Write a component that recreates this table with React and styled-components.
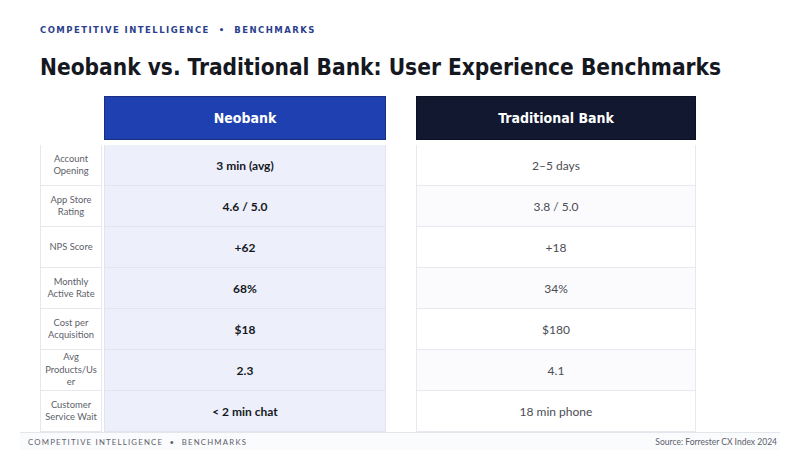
import React from 'react';
import styled, { createGlobalStyle } from 'styled-components';

const GlobalStyle = createGlobalStyle`
  html, body {
    margin: 0;
    padding: 0;
    background: #ffffff;
  }
  * {
    box-sizing: border-box;
  }
`;

const Page = styled.div`
  width: 800px;
  height: 450px;
  overflow: hidden;
  display: flex;
  flex-direction: column;
  background: #ffffff;
  font-family: Lato, "Open Sans", sans-serif;
`;

const Head = styled.div`
  padding: 24px 40px 0 40px;
`;

const Eyebrow = styled.div`
  font-family: "DejaVu Sans", sans-serif;
  font-weight: bold;
  font-size: 8.5px;
  letter-spacing: 1.45px;
  color: #2b3f8e;
  line-height: 12px;
`;

const Title = styled.h1`
  margin: 17px 0 0 0;
  font-family: "DejaVu Sans Condensed", "DejaVu Sans", sans-serif;
  font-weight: bold;
  font-size: 22.5px;
  line-height: 28px;
  color: #16181f;
`;

const Table = styled.div`
  flex: 1;
  min-height: 0;
  overflow: hidden;
  display: flex;
  padding: 15px 0 0 40px;
`;

const Column = styled.div`
  width: ${p => p.width}px;
  margin-left: ${p => p.offset || 0}px;
  display: flex;
  flex-direction: column;
  flex-shrink: 0;
`;

const HeaderCell = styled.div`
  height: 45px;
  margin-bottom: 5px;
  display: flex;
  align-items: center;
  justify-content: center;
  background: ${p => p.bg || 'transparent'};
  border: ${p => (p.bg ? `1px solid ${p.edge}` : 'none')};
  color: #ffffff;
  font-family: "DejaVu Sans Condensed", "DejaVu Sans", sans-serif;
  font-weight: bold;
  font-size: 14px;
`;

const LabelCell = styled.div`
  height: 41px;
  flex-shrink: 0;
  display: flex;
  align-items: center;
  justify-content: center;
  padding: 0 4px;
  background: #ffffff;
  border: 1px solid #e6e8ee;
  border-top: none;
  &:first-of-type {
    border-top: 1px solid #e6e8ee;
  }
  font-size: 9.4px;
  line-height: 12.5px;
  color: #5d6169;
  text-align: center;
  overflow-wrap: anywhere;
`;

const ValueCell = styled.div`
  height: 41px;
  flex-shrink: 0;
  display: flex;
  align-items: center;
  justify-content: center;
  background: ${p => p.bg};
  border: 1px solid ${p => p.edge};
  border-top: none;
  &:first-of-type {
    border-top: 1px solid ${p => p.edge};
  }
  font-size: 12px;
  font-weight: ${p => (p.strong ? 700 : 400)};
  color: ${p => (p.strong ? '#16181f' : '#4a4d55')};
`;

const Footer = styled.div`
  height: 18px;
  flex-shrink: 0;
  margin: 0 20px;
  padding: 0 3px 0 8px;
  display: flex;
  align-items: center;
  justify-content: space-between;
  background: #fafbfd;
  border-top: 1px solid #e4e6ec;
  font-size: 8.5px;
  color: #5c6068;
`;

const FooterTag = styled.span`
  font-size: 7.8px;
  letter-spacing: 1.2px;
`;

const rows = [
  { label: 'Account Opening', neo: '3 min (avg)', trad: '2–5 days' },
  { label: 'App Store Rating', neo: '4.6 / 5.0', trad: '3.8 / 5.0' },
  { label: 'NPS Score', neo: '+62', trad: '+18' },
  { label: 'Monthly Active Rate', neo: '68%', trad: '34%' },
  { label: 'Cost per Acquisition', neo: '$18', trad: '$180' },
  { label: 'Avg Products/User', neo: '2.3', trad: '4.1' },
  { label: 'Customer Service Wait', neo: '< 2 min chat', trad: '18 min phone' },
];

export default function App() {
  return (
    <Page>
      <GlobalStyle />
      <Head>
        <Eyebrow>COMPETITIVE INTELLIGENCE &nbsp;•&nbsp; BENCHMARKS</Eyebrow>
        <Title>Neobank vs. Traditional Bank: User Experience Benchmarks</Title>
      </Head>

      <Table>
        <Column width={62}>
          <HeaderCell />
          {rows.map(r => (
            <LabelCell key={r.label}>{r.label}</LabelCell>
          ))}
        </Column>

        <Column width={282} offset={2}>
          <HeaderCell bg="#1f40b0" edge="#1a2f7e">Neobank</HeaderCell>
          {rows.map(r => (
            <ValueCell key={r.label} bg="#edf0fa" edge="#e2e5f0" strong>
              {r.neo}
            </ValueCell>
          ))}
        </Column>

        <Column width={280} offset={30}>
          <HeaderCell bg="#111830" edge="#0b1022">Traditional Bank</HeaderCell>
          {rows.map((r, i) => (
            <ValueCell key={r.label} bg={i % 2 ? '#fbfbfe' : '#ffffff'} edge="#e8e9ef">
              {r.trad}
            </ValueCell>
          ))}
        </Column>
      </Table>

      <Footer>
        <FooterTag>COMPETITIVE INTELLIGENCE &nbsp;•&nbsp; BENCHMARKS</FooterTag>
        <span>Source: Forrester CX Index 2024</span>
      </Footer>
    </Page>
  );
}
